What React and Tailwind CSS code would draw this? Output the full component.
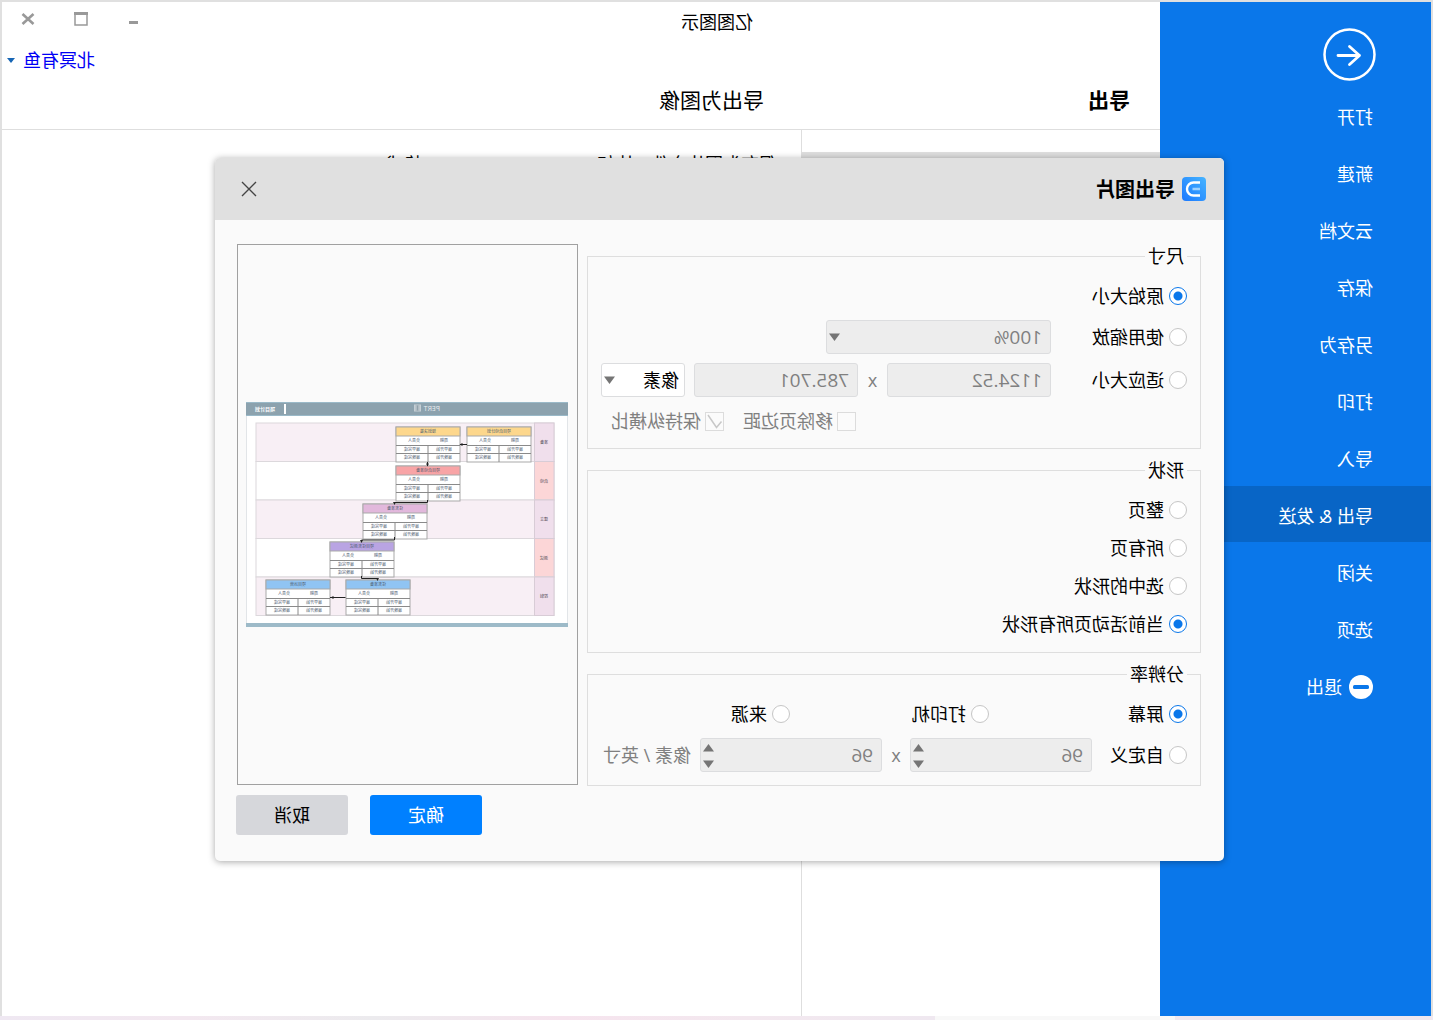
import React from "react";

const MENU = ["打开", "新建", "云文档", "保存", "另存为", "打印", "导入", "导出 & 发送", "关闭", "选项"];

const LANES = ["准备", "启动", "建立", "测试", "控制"];

const TASKS = [
  { x: 37, y: 25, color: "#fdd78c", title: "项目启动计划" },
  { x: 108, y: 25, color: "#fdd78c", title: "规划决策" },
  { x: 108, y: 64, color: "#f8a4a6", title: "项目启动准备" },
  { x: 141, y: 102, color: "#e2b8dc", title: "任务准备" },
  { x: 174, y: 140, color: "#b9a4e3", title: "项目任务测试" },
  { x: 158, y: 178, color: "#90c4f3", title: "任务准备" },
  { x: 238, y: 178, color: "#90c4f3", title: "项目运营" },
];

function Task({ x, y, color, title }) {
  return (
    <g transform={`translate(${x} ${y})`} fontSize="4" fill="#4b5a6e" textAnchor="middle">
      <rect width="64" height="35" fill="#fff" stroke="#a9a9a9" />
      <rect width="64" height="9" fill={color} stroke="#a9a9a9" />
      <path d="M0 18.5h64M0 26.5h64M32 18.5V35" stroke="#8a8a8a" fill="none" />
      <text x="32" y="6">{title}</text>
      <text x="16" y="15">周期</text>
      <text x="46" y="15">负责人</text>
      <text x="16" y="24">最早开始</text>
      <text x="48" y="24">最早完成</text>
      <text x="16" y="32">最晚开始</text>
      <text x="48" y="32">最晚完成</text>
    </g>
  );
}

function PertPreview() {
  return (
    <svg viewBox="0 0 322 225" className="w-full max-w-[322px]" role="img" aria-label="PERT">
      <rect x="0.5" y="0.5" width="321" height="224" fill="#fff" stroke="#e2e5e8" />
      <rect width="322" height="14" fill="#8ca2ae" />
      <path d="M0 .5h322M0 13.5h322" stroke="#9ab9c8" />
      <text x="128" y="9" fontSize="7" fill="#e9eef1">PERT</text>
      <rect x="147" y="2.5" width="7" height="7" fill="#c5cfd5" />
      <path d="M148.5 4h4M148.5 6h4M148.5 8h4M150.5 3.5v5" stroke="#8496a1" strokeWidth=".7" />
      <rect x="282" y="2" width="2" height="10" fill="#fff" />
      <text x="293" y="9" fontSize="5" fontWeight="bold" fill="#fff">项目计划</text>
      <rect y="221" width="322" height="4" fill="#9dbac8" />
      {LANES.map((lane, i) => (
        <g key={lane} transform={`translate(14 ${21 + i * 38.5})`}>
          <rect width="298" height="38.5" fill={i % 2 ? "#fff" : "#f8eff5"} stroke="#dcd8dc" />
          <rect width="19.5" height="38.5" fill={i % 2 ? "#fcd6d7" : "#f0dfec"} stroke="#d8ccd6" />
          <text x="10" y="21" fontSize="4" fill="#4b4450" textAnchor="middle">{lane}</text>
        </g>
      ))}
      {TASKS.map((task) => (
        <Task key={`${task.x}-${task.y}`} {...task} />
      ))}
      <path
        d="M101 42.5h7M140.5 60v4M140.5 98v2.5h33v1.5M173.5 135v3h33v2M206.5 174v2.5h-16v1.5M222.5 195.5H238"
        fill="none"
        stroke="#222"
      />
      <path
        d="M105.5 41v3l3-1.5zM139 61.500h3l-1.500 3zM172 100h3l-1.500 3zM205 138h3l-1.500 3zM189 176h3l-1.500 3zM234.500 194v3l3-1.500z"
        fill="#222"
      />
    </svg>
  );
}

function Triangle({ up, className = "" }) {
  return (
    <svg viewBox="0 0 11 8" className={`h-2 w-[11px] ${className}`} aria-hidden="true">
      <path d={up ? "M0 7.500h11L5.500 0z" : "M0 .5h11L5.500 8z"} fill="#757575" />
    </svg>
  );
}

function Radio({ name, label, checked = false, className = "" }) {
  return (
    <label className={`flex items-center gap-[5px] ${className}`}>
      <input
        type="radio"
        name={name}
        defaultChecked={checked}
        className="size-[18px] shrink-0 appearance-none rounded-full border border-[#c6c6c6] bg-white checked:border-[#0a77ea] checked:bg-[radial-gradient(circle,#0a77ea_4px,#fff_5px)]"
      />
      {label}
    </label>
  );
}

function Check({ label, checked = false }) {
  return (
    <label className="flex items-center gap-1 text-[#808080]">
      <span className="relative flex">
        <input
          type="checkbox"
          disabled
          defaultChecked={checked}
          className="size-[19px] appearance-none border border-[#dcdcdc] bg-[#fbfbfb]"
        />
        {checked && (
          <svg viewBox="0 0 19 19" className="absolute inset-0 size-[19px]" fill="none" stroke="#c8c8c8" strokeWidth="1.500">
            <path d="M2.500 9.500l5 6L16 3" />
          </svg>
        )}
      </span>
      {label}
    </label>
  );
}

function Group({ title, className = "", children }) {
  return (
    <fieldset className={`flex flex-col border border-[#dedede] px-[13px] pt-4 ${className}`}>
      <legend className="px-[3px] leading-6">{title}</legend>
      {children}
    </fieldset>
  );
}

const FIELD = "h-[34px] rounded-[3px] border border-[#dcdddf] bg-[#ededed] pl-2 text-[19px] text-[#808080]";

function Select({ label, value, disabled, className = "" }) {
  return (
    <div className="relative">
      <select aria-label={label} disabled={disabled} className={`appearance-none opacity-100 ${className}`}>
        <option>{value}</option>
      </select>
      <Triangle className="absolute top-[13px] right-[3px]" />
    </div>
  );
}

function Spinner({ label }) {
  return (
    <div className="relative">
      <input aria-label={label} disabled defaultValue="96" className={`w-[182px] ${FIELD}`} />
      <div className="absolute top-[6px] right-[3px] flex flex-col gap-2">
        <Triangle up />
        <Triangle />
      </div>
    </div>
  );
}

function ExportDialog() {
  return (
    <div
      role="dialog"
      aria-label="导出图片"
      className="w-[1009px] overflow-hidden rounded-[5px] bg-[#fafafa] shadow-[0_1px_7px_rgba(0,0,0,0.35)]"
    >
      <header className="flex h-[62px] items-center bg-[#e0e0e0] pr-[26px] pl-[18px]">
        <svg viewBox="0 0 24 24" className="size-6" aria-hidden="true">
          <defs>
            <linearGradient id="logo" x1="0" y1="0" x2="1" y2="1">
              <stop offset="0" stopColor="#46b4ff" />
              <stop offset="1" stopColor="#1a78ff" />
            </linearGradient>
          </defs>
          <rect width="24" height="24" rx="4" fill="url(#logo)" />
          <path d="M6 5.500h6.500a6.500 6.500 0 0 1 0 13H6" fill="none" stroke="#fff" strokeWidth="2.400" />
          <path d="M6 12h7.500" stroke="#9fd2ff" strokeWidth="2.400" />
        </svg>
        <h2 className="ml-[7px] pt-0.5 text-[20px] font-bold">导出图片</h2>
        <button type="button" aria-label="关闭" className="ml-auto">
          <svg viewBox="0 0 16 16" className="size-4" stroke="#444" strokeWidth="1.400">
            <path d="M1 1l14 14M15 1L1 15" />
          </svg>
        </button>
      </header>

      <div className="flex gap-[9px] pt-6 pl-[23px]">
        <div className="flex w-[614px] flex-col gap-[9px]">
          <Group title="尺寸" className="pb-[15px]">
            <Radio name="size" label="原始大小" checked className="h-6" />
            <div className="mt-3 flex items-center">
              <Radio name="size" label="使用缩放" className="w-[136px]" />
              <Select label="缩放" value="100%" disabled className={`w-[225px] ${FIELD}`} />
            </div>
            <div className="mt-[9px] flex items-center">
              <Radio name="size" label="适应大小" className="w-[136px]" />
              <input aria-label="宽度" disabled defaultValue="1124.52" className={`w-[164px] ${FIELD}`} />
              <span className="w-[29px] text-center text-[#808080]">x</span>
              <input aria-label="高度" disabled defaultValue="785.701" className={`mr-[9px] w-[164px] ${FIELD}`} />
              <Select
                label="单位"
                value="像素"
                className="h-[34px] w-[84px] rounded-[3px] border border-[#dcdddf] bg-white pl-[5px]"
              />
            </div>
            <div className="mt-3 flex h-6 items-center gap-[19px] pl-[331px]">
              <Check label="移除页边距" />
              <Check label="保持纵横比" checked />
            </div>
          </Group>

          <Group title="形状" className="gap-[14px] pb-4">
            <Radio name="shape" label="整页" className="h-6" />
            <Radio name="shape" label="所有页" className="h-6" />
            <Radio name="shape" label="选中的形状" className="h-6" />
            <Radio name="shape" label="当前活动页所有形状" checked className="h-6" />
          </Group>

          <Group title="分辨率" className="gap-3 pb-[13px]">
            <div className="flex h-6 items-center">
              <Radio name="dpi" label="屏幕" checked className="w-[198px]" />
              <Radio name="dpi" label="打印机" className="w-[199px]" />
              <Radio name="dpi" label="来源" />
            </div>
            <div className="flex items-center">
              <Radio name="dpi" label="自定义" className="w-[95px]" />
              <Spinner label="水平分辨率" />
              <span className="w-7 text-center text-[#808080]">x</span>
              <Spinner label="垂直分辨率" />
              <span className="ml-[9px] whitespace-nowrap text-[#808080]">像素 / 英寸</span>
            </div>
          </Group>
        </div>

        <div className="flex h-[541px] w-[341px] items-center justify-center border border-[#a0a0a0] px-2">
          <PertPreview />
        </div>
      </div>

      <footer className="mt-[9px] flex justify-end gap-[22px] pr-[21px] pb-[26px]">
        <button type="button" className="h-10 w-28 rounded-[3px] bg-[#0080ff] text-white">确定</button>
        <button type="button" className="h-10 w-28 rounded-[3px] bg-[#d6d7db]">取消</button>
      </footer>
    </div>
  );
}

function Sidebar() {
  return (
    <nav className="w-[271px] shrink-0 bg-[#0a77ea] pt-[26px] text-white">
      <button type="button" aria-label="返回" className="ml-[55px] block">
        <svg viewBox="0 0 53 53" className="size-[53px]" fill="none" stroke="#fff" strokeWidth="2.500">
          <circle cx="26.500" cy="26.500" r="25" />
          <path
            d="M38 27.500H16.500M26.500 18.500l-10 9 10 9"
            strokeWidth="2.800"
            strokeLinecap="round"
            strokeLinejoin="round"
          />
        </svg>
      </button>
      <ul className="mt-[6px] flex flex-col gap-px">
        {MENU.map((item) => (
          <li key={item}>
            <a
              href="#"
              className={`flex h-14 items-center pt-1 pl-[58px] ${item.includes("&") ? "bg-[#0865c6]" : ""}`}
            >
              {item}
            </a>
          </li>
        ))}
        <li>
          <a href="#" className="flex h-14 items-center gap-[7px] pt-1 pl-[58px]">
            <svg viewBox="0 0 24 24" className="size-6" aria-hidden="true">
              <circle cx="12" cy="12" r="12" fill="#fff" />
              <rect x="4" y="10" width="16" height="4" rx="1.500" fill="#0a77ea" />
            </svg>
            退出
          </a>
        </li>
      </ul>
    </nav>
  );
}

function App() {
  return (
    <div className="relative flex min-h-screen -scale-x-100 flex-col bg-[#e0e0e0] pt-0.5 font-['Open_Sans','Noto_Sans_CJK_SC',sans-serif] text-[18px] text-black">
      <div className="flex flex-1 px-0.5">
        <Sidebar />
        <main className="flex flex-1 flex-col bg-white">
          <div className="flex h-[41px] items-center">
            <h1 className="flex-1 pr-[119px] text-center">亿图图示</h1>
            <div className="flex w-[153px] items-center gap-[39px] pl-[14px] pb-2">
              <button type="button" aria-label="最小化">
                <svg viewBox="0 0 14 14" className="size-[14px]">
                  <rect x="3" y="9" width="9" height="3" fill="#999" />
                </svg>
              </button>
              <button type="button" aria-label="最大化">
                <svg viewBox="0 0 14 14" className="size-[14px]" fill="none" stroke="#999">
                  <path d="M1 1v12h12V1" strokeWidth="1.500" />
                  <path d="M0 1.500h14" strokeWidth="3" />
                </svg>
              </button>
              <button type="button" aria-label="关闭窗口">
                <svg viewBox="0 0 14 14" className="size-[14px]" stroke="#999" strokeWidth="2.600">
                  <path d="M1.500 2l11 10M12.500 2l-11 10" />
                </svg>
              </button>
            </div>
          </div>
          <a href="#" className="flex h-[34px] items-center justify-end gap-2 pr-[5px] text-[#0000f5]">
            北冥有鱼
            <svg viewBox="0 0 8 5" className="h-[5px] w-2">
              <path d="M0 0h8L4 5z" fill="#1766b5" />
            </svg>
          </a>
          <div className="flex h-[53px] items-center border-b border-[#dedede] pb-1 text-[21px]">
            <h2 className="w-[396px] pl-[30px] font-bold">导出</h2>
            <h3>导出为图像</h3>
          </div>
          <div className="flex flex-1">
            <div className="w-[359px] shrink-0 border-r border-[#dedede] pt-[22px]">
              <div className="h-14 bg-[#dedede]" />
            </div>
            <p className="pt-5 pl-6 leading-7">保存为图片文件，比如 BMP, JPEG, PNG, GIF格式。</p>
          </div>
        </main>
      </div>
      <div className="flex h-1 bg-[#f0e8f0]">
        <div className="w-[258px] bg-[#f1e8ef]" />
        <div className="w-60 bg-[#f8f8f8]" />
        <div className="flex-1 bg-[linear-gradient(90deg,#efe8f0,#f3e8ef,#f6e4ee,#ecebee,#f3e8f0,#efe8f2)]" />
      </div>

      <div className="absolute inset-0 flex items-center justify-center pr-1.5 pb-px">
        <ExportDialog />
      </div>
    </div>
  );
}

export default App;
